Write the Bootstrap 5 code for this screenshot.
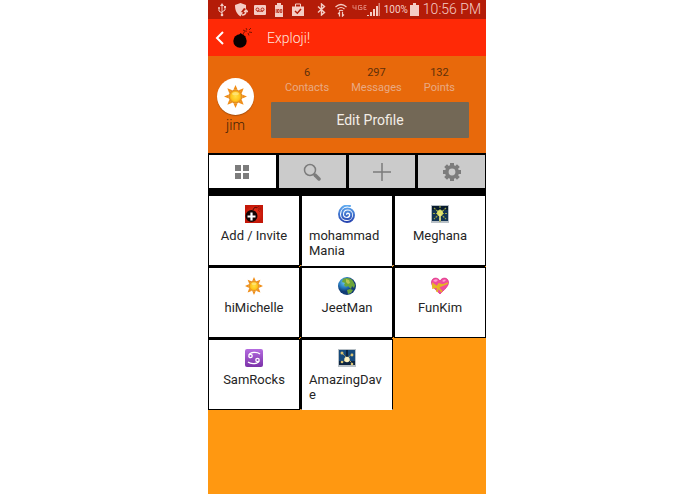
<!DOCTYPE html>
<html lang="en">
<head>
<meta charset="utf-8">
<meta name="viewport" content="width=device-width, initial-scale=1">
<title>Exploji!</title>
<link href="https://cdn.jsdelivr.net/npm/bootstrap@5.3.0/dist/css/bootstrap.min.css" rel="stylesheet">
<style>
body{font-family:Roboto,"Liberation Sans",sans-serif;background:#fff;padding-right:1px;font-size:13px;color:#222}
svg{display:block;flex:none}
.phone{max-width:278px;background:#ff9811}
.statusbar{background:#b41c08;color:#f5cdc5;height:19px;padding:0 5px 0 7px}
.sys-icons{gap:5px}
.pct{font-size:10px;line-height:19px;margin:0 2px 0 4px}
.clock{font-size:14px;line-height:19px;font-weight:300;margin-left:4px}
.appbar{background:#ff2906;height:37px;padding:0 6px}
.appbar h1{font-size:14px;font-weight:300;line-height:18px;color:#ffe4dc;margin-left:15px}
.profile{background:#e8690b;height:97px;padding:9px 17px 0 9px;gap:17px}
.who{width:37px;padding-top:13px;font-size:14px;line-height:20px;font-weight:300;color:#402108}
.avatar{width:37px;height:37px;box-shadow:0 1px 1px #a64d0a}
.stats{font-size:11px;line-height:15px;color:#e8a984;padding:0 14px}
.stats dt{font-weight:400;color:#60300a}
.btn-edit{background:#736856;color:#f3eee6;font-size:14px;line-height:20px;border:0;border-radius:1px;padding:8px;margin-top:7px}
.btn-edit:hover{background:#665c4c;color:#fff}
.tabs{background:#000;padding:2px 1px 7px;gap:3px}
.tabs button{background:#cbcbcb;color:#7c7c7c;border:0;height:33px;flex:1 1 0;padding:0}
.tabs button.active{background:#fff}
.tiles{display:grid;grid-template-columns:repeat(3,1fr);grid-auto-rows:71px;gap:1px}
.tile{border:1px solid #000;box-shadow:-1px -1px 0 #000;background:#fff;color:#252525;padding:9px 7px 0;gap:5px;line-height:15px;min-width:0}
.tile span{max-width:100%;overflow-wrap:anywhere}
.open-end{border-bottom-color:#fff}
</style>
<script src="https://cdn.jsdelivr.net/npm/bootstrap@5.3.0/dist/js/bootstrap.bundle.min.js"></script>
</head>
<body>
<svg width="0" height="0" class="position-absolute" aria-hidden="true">
<defs>
<radialGradient id="sunfill"><stop offset="0" stop-color="#ffdf45"/><stop offset=".65" stop-color="#ffc51d"/><stop offset="1" stop-color="#ed9414"/></radialGradient>
<linearGradient id="swirl" x2="0" y2="1"><stop stop-color="#5faaf0"/><stop offset="1" stop-color="#2643af"/></linearGradient>
<linearGradient id="violet" x2="0" y2="1"><stop stop-color="#b56ce0"/><stop offset="1" stop-color="#7b31a8"/></linearGradient>
<radialGradient id="sea" cx=".35" cy=".3"><stop stop-color="#6dc9ef"/><stop offset=".6" stop-color="#2678bd"/><stop offset="1" stop-color="#123c74"/></radialGradient>
<radialGradient id="redtile"><stop stop-color="#f33b1e"/><stop offset="1" stop-color="#c41708"/></radialGradient>
<symbol id="sun" viewBox="0 0 24 24"><path fill="#f08d16" d="M12 0l2.200 5h-4.400zM12 24l2.200-5H9.800zM0 12l5-2.200v4.400zM24 12l-5-2.200v4.400zM3.500 3.500l5.200 2-3.200 3.200zM20.500 3.500l-5.200 2 3.200 3.200zM3.500 20.500l5.200-2-3.200-3.200zM20.500 20.500l-5.200-2 3.200-3.200z"/><circle cx="12" cy="12" r="6.700" fill="url(#sunfill)" stroke="#df8415"/><ellipse cx="12" cy="9" rx="3.500" ry="1.800" fill="#fff0a0" opacity=".6"/></symbol>
</defs>
</svg>
<div class="phone d-flex flex-column min-vh-100 mx-auto overflow-hidden">
  <div class="statusbar d-flex align-items-center">
    <div class="sys-icons d-flex align-items-center">
      <svg width="14" height="14" viewBox="0 0 14 14" fill="none" stroke="currentColor"><path d="M7 12V3M7 10L4 8V5.500M7 9l3-2V5"/><path fill="currentColor" stroke="none" d="M7 0l2 3H5zM9 3h2v2H9z"/><circle cx="4" cy="5" r="1" fill="currentColor" stroke="none"/><circle cx="7" cy="12" r="1.300" fill="currentColor" stroke="none"/></svg>
      <svg width="14" height="14" viewBox="0 0 14 14"><path fill="currentColor" d="M6.500 0L12 2v4l-2-1-3 4 2 .5-2.500 4C3 11 1 8 1 2z"/><path fill="none" stroke="currentColor" stroke-width="1.500" d="M8 12c3 0 4-1 4-4M10 9l2-2 2 2"/></svg>
      <svg width="14" height="14" viewBox="0 0 14 14"><rect y="2" x="1" width="12" height="10" rx="1" fill="currentColor"/><g fill="none" stroke="#b41c08" stroke-width=".9"><circle cx="4.500" cy="6.500" r="1.500"/><circle cx="9.500" cy="6.500" r="1.500"/><path d="M4 8.200h6" /></g></svg>
      <svg width="14" height="14" viewBox="0 0 14 14"><path fill="currentColor" d="M5 0h4v2h2v12H3V2h2z"/><path stroke="#b41c08" fill="none" stroke-width=".8" d="M4.200 6v4M5.500 6.500h1.500v3H5.500zM8.300 6.500h1.500v3H8.300z"/></svg>
      <svg width="14" height="14" viewBox="0 0 14 14"><path fill="currentColor" d="M1 3.500h12V13H1z"/><path fill="none" stroke="currentColor" d="M4.500 4V1h5v3"/><path fill="none" stroke="#b41c08" stroke-width="1.500" d="M4 8l2.300 2.200L10 6"/></svg>
    </div>
    <div class="d-flex align-items-center ms-auto">
      <svg width="9" height="13" viewBox="0 0 9 13" fill="none" stroke="currentColor" stroke-width="1.400"><path d="M1 3.500l6.500 6L4.500 12V1l3 2.500-6.500 6"/></svg>
      <svg class="ms-2" width="14" height="14" viewBox="0 0 14 14" fill="none" stroke="currentColor" stroke-width="1.200"><path d="M1.500 4Q7-1 12.500 4M3.500 6Q7 3 10.500 6M5 8q2-1.500 4 0M5.500 13.500V9.500L4 11M8.500 9v4L10 11.500"/></svg>
      <svg class="ms-1" width="15" height="12" viewBox="0 0 15 12" fill="none" stroke="#dc7a6d"><path d="M1 1v3h3.500M4 1v5M10 1.500H6.500v4H10v-2H8M14.500 1.500H12v4h2.500M12 3.500h2"/></svg>
      <svg width="13" height="13" viewBox="0 0 13 13"><path fill="currentColor" d="M0 12h2v1H0zM3 9h2v4H3zM6 6h2v7H6zM9 3h2v10H9z"/><path fill="#dc8175" d="M11.500 0H13v13h-1.500z"/></svg>
      <span class="pct">100%</span>
      <svg width="9" height="13" viewBox="0 0 9 13"><path fill="currentColor" d="M3 0h3v2h3v11H0V2h3z"/></svg>
      <span class="clock">10:56 PM</span>
    </div>
  </div>
  <header class="appbar d-flex align-items-center">
    <a href="#" aria-label="Back" class="d-flex align-items-center">
      <svg width="10" height="16" viewBox="0 0 10 16" fill="none" stroke="#fff" stroke-width="2"><path d="M9 2L3 8l6 6"/></svg>
      <svg class="ms-2" width="20" height="22" viewBox="0 0 20 22"><circle cx="8" cy="14" r="6.700" fill="#080000"/><path fill="#080000" d="M8.500 6l5 3.500-2 2.500-5-3z"/><path fill="none" stroke="#5c0b00" stroke-width=".8" d="M11 8c1-4 3-4.500 4-3.500M15 3l-1-2M17 3l2-2M17 5l3 .5M16 6l1 2.500M13 4l-2-1"/></svg>
    </a>
    <h1 class="mb-0">Exploji!</h1>
  </header>
  <section class="profile d-flex">
    <div class="who d-flex flex-column align-items-center">
      <div class="avatar bg-white rounded-circle d-flex align-items-center justify-content-center"><svg width="23" height="23"><use href="#sun"/></svg></div>
      <span>jim</span>
    </div>
    <div class="flex-grow-1">
      <dl class="stats d-flex justify-content-between text-center mb-0">
        <div><dt>6</dt><dd class="mb-0">Contacts</dd></div>
        <div><dt>297</dt><dd class="mb-0">Messages</dd></div>
        <div><dt>132</dt><dd class="mb-0">Points</dd></div>
      </dl>
      <button type="button" class="btn btn-edit w-100">Edit Profile</button>
    </div>
  </section>
  <nav class="tabs d-flex" aria-label="Sections">
    <button type="button" class="active d-flex align-items-center justify-content-center" aria-label="Grid"><svg width="14" height="14" viewBox="0 0 14 14"><path fill="currentColor" d="M0 0h6v6H0zM8 0h6v6H8zM0 8h6v6H0zM8 8h6v6H8z"/></svg></button>
    <button type="button" class="d-flex align-items-center justify-content-center" aria-label="Search"><svg width="18" height="18" viewBox="0 0 18 18" fill="none" stroke="currentColor"><circle cx="7" cy="7" r="5.500" stroke-width="1.500"/><path stroke-width="3.500" stroke-linecap="round" d="M12 12l4 4"/></svg></button>
    <button type="button" class="d-flex align-items-center justify-content-center" aria-label="Add"><svg width="18" height="18" viewBox="0 0 18 18"><path stroke="currentColor" stroke-width="1.500" d="M9 0v18M0 9h18"/></svg></button>
    <button type="button" class="d-flex align-items-center justify-content-center" aria-label="Settings"><svg width="18" height="18" viewBox="0 0 18 18"><circle cx="9" cy="9" r="5.200" fill="none" stroke="currentColor" stroke-width="3.600"/><path stroke="currentColor" stroke-width="4" d="M9 0v3M9 15v3M0 9h3M15 9h3M2.600 2.600l2.200 2.200M13.200 13.200l2.200 2.200M15.400 2.600l-2.200 2.200M4.800 13.200l-2.200 2.200"/></svg></button>
  </nav>
  <main class="tiles">
    <a href="#" class="tile d-flex flex-column align-items-center text-decoration-none"><svg width="18" height="18" viewBox="0 0 18 18"><path fill="url(#redtile)" d="M0 0h18v18H0z"/><circle cx="6.500" cy="11" r="6" fill="#150504"/><path stroke="#400905" fill="none" d="M8 5c1-3 3-3 4-2"/><path stroke="#8a1508" stroke-width=".7" d="M12 3l2-2M13 4h3M13 5l2 2"/><path stroke="#fff" stroke-width="2.200" d="M6.500 7.500v8M2.500 11.500h8"/></svg><span>Add / Invite</span></a>
    <a href="#" class="tile open-end d-flex flex-column align-items-center text-decoration-none"><svg width="18" height="18" viewBox="0 0 18 18" fill="none" stroke="url(#swirl)" stroke-width="2" stroke-linecap="round"><path d="M12 1C5-1 1 5 1 9c0 5 4 8 8 8s7-3 7-7-3-6.500-6.500-6.500S4 6 4 9.500 7 14 9.500 14s3.700-2 3.700-4-1.500-3.500-3.500-3.500S7 8 7 9.500s2 2 3 .5"/></svg><span>mohammad Mania</span></a>
    <a href="#" class="tile d-flex flex-column align-items-center text-decoration-none"><svg width="18" height="18" viewBox="0 0 18 18"><path fill="#b8c0c6" d="M0 0h18v18H0z"/><path fill="#123554" d="M1 1h16v15H1z"/><path fill="#071b2e" d="M1 1h16v4H1z"/><path stroke="#9ba844" stroke-width="1.200" stroke-dasharray="2 1" d="M9 1v16M3 3l12 11M15 3L3 14M2 8.500h14"/><circle cx="9" cy="8" r="3" fill="#dfe36b"/><path stroke="#f2ed91" stroke-width="1.500" d="M9 9v7"/></svg><span>Meghana</span></a>
    <a href="#" class="tile d-flex flex-column align-items-center text-decoration-none"><svg width="18" height="18"><use href="#sun"/></svg><span>hiMichelle</span></a>
    <a href="#" class="tile d-flex flex-column align-items-center text-decoration-none"><svg width="18" height="18" viewBox="0 0 18 18"><circle cx="9" cy="9" r="9" fill="url(#sea)"/><path fill="#6da53a" d="M5 2c4-2 8-1 10 2l2 4-1 3-2-2-1 3-3-3-2 1-2-2 1-2-3-1zM9 13l3-1 3 1-2 3-3 1z"/><path fill="#c9ce56" d="M8 2l3 1 1 3-2 1-2-2z" opacity=".8"/></svg><span>JeetMan</span></a>
    <a href="#" class="tile d-flex flex-column align-items-center text-decoration-none"><svg width="18" height="18" viewBox="0 0 18 18"><path fill="#f04b9c" stroke="#d92c82" stroke-width=".7" d="M9 17C5 13 0 9 .5 5 1 0 7 0 9 4c2-4 8-4 8.500 1C18 9 13 13 9 17z"/><path fill="#ff9bcb" d="M2 4q2-3 5-1L5 5zM11 4q2-2.500 4-1l-2 2z"/><path fill="none" stroke="#e5b622" stroke-width="1.700" d="M1 9l6 1L17 6M7 10l4 5M6 10L2 7v4l4-1 2-3 3 1-4 2-1 5"/></svg><span>FunKim</span></a>
    <a href="#" class="tile d-flex flex-column align-items-center text-decoration-none"><svg width="18" height="18" viewBox="0 0 18 18"><rect width="18" height="18" rx="2" fill="url(#violet)"/><g fill="none" stroke="#fff" stroke-width="1.300"><circle cx="5.500" cy="7" r="1.700"/><path d="M4 6c1-3 8-3.500 11-1M14 12c-1 3-8 3.500-11 1"/><circle cx="12.500" cy="11" r="1.700"/></g></svg><span>SamRocks</span></a>
    <a href="#" class="tile open-end d-flex flex-column align-items-center text-decoration-none"><svg width="18" height="18" viewBox="0 0 18 18"><path fill="#b8c0c6" d="M0 0h18v18H0z"/><path fill="#174a7b" d="M1 1h16v15H1z"/><path fill="#0c2440" d="M1 12h16v4H1zM8 1h2v8H8z"/><path stroke="#c1a95a" stroke-dasharray="2 1" d="M3 3l12 12M14 5L4 14"/><g fill="#d9c374"><circle cx="4" cy="4" r="1.500"/><circle cx="14" cy="6" r="1.400"/><circle cx="4" cy="13" r="1.300"/><circle cx="14" cy="15" r="1.300"/></g><circle cx="9" cy="10.500" r="2.700" fill="#fff3c0"/></svg><span>AmazingDave</span></a>
  </main>
</div>
</body>
</html>
